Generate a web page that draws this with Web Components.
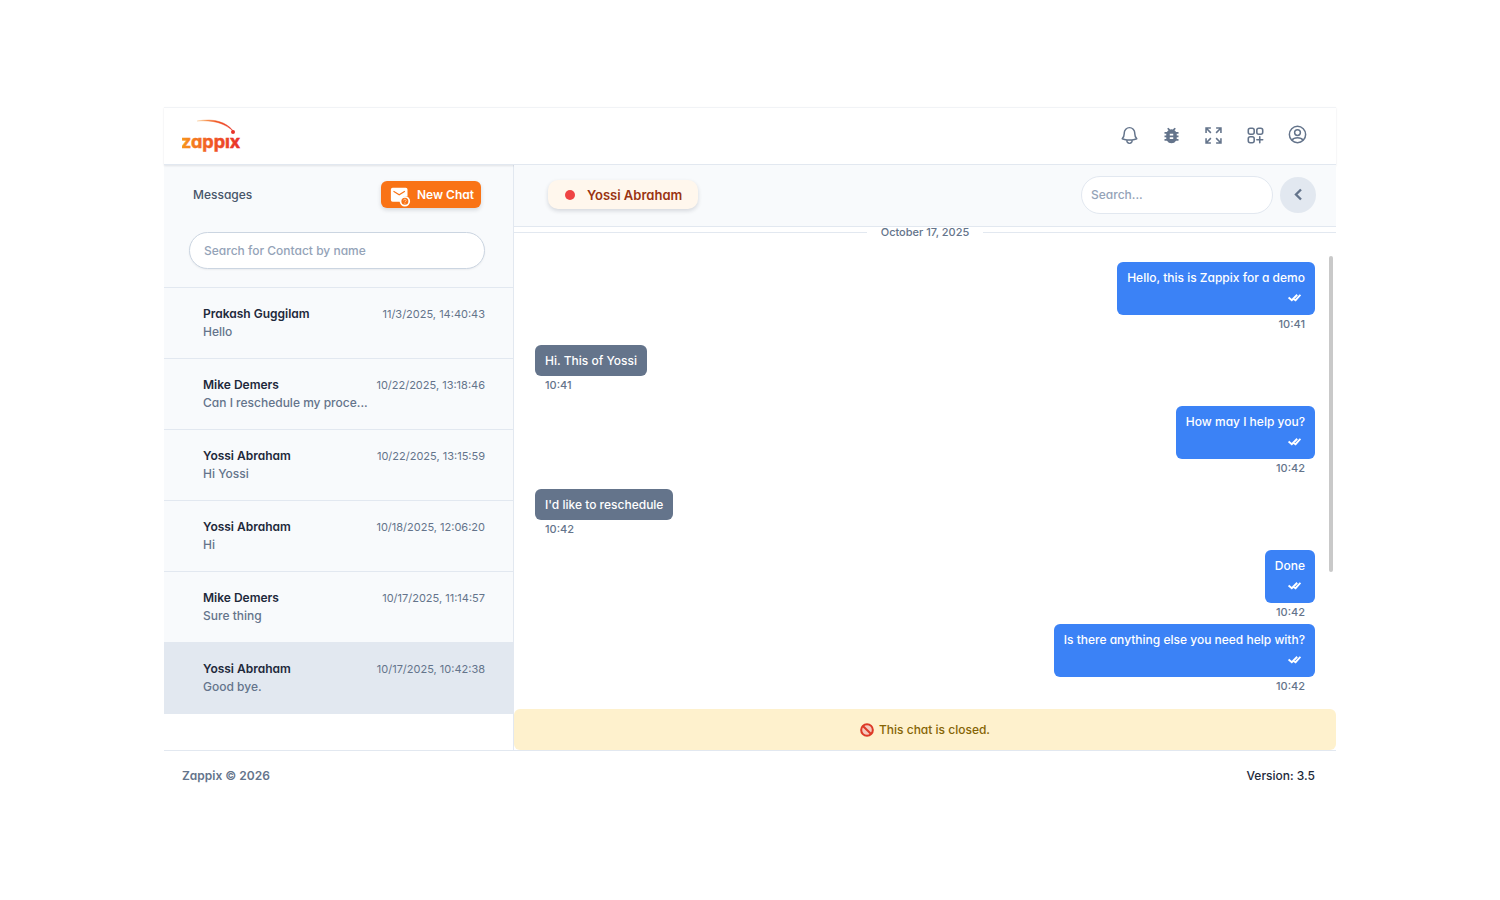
<!DOCTYPE html>
<html lang="en">
<head>
<meta charset="utf-8">
<title>Zappix Messages</title>
<style>
  body {
    margin: 0;
    background: #fff;
    color: #1e293b;
    font-family: Inter, "Liberation Sans", sans-serif;
    font-size: 12px;
    font-weight: 500;
    font-feature-settings: "cv11";
  }
</style>
</head>
<body>
<zx-app></zx-app>
<script>
const define = (name, html, setup) => {
  const template = document.createElement('template');
  template.innerHTML = `<style>:host,*{box-sizing:border-box}button,input{font:inherit;font-feature-settings:inherit;margin:0}</style>` + html;
  customElements.define(name, class extends HTMLElement {
    constructor() {
      super();
      this.attachShadow({ mode: 'open' }).append(template.content.cloneNode(true));
    }
    connectedCallback() { if (setup) setup(this, this.shadowRoot); }
  });
};

const icons = {
  bell: '<path fill="none" stroke="currentColor" stroke-width="1.7" stroke-linecap="round" stroke-linejoin="round" d="M14.857 17.082a23.848 23.848 0 0 0 5.454-1.31A8.967 8.967 0 0 1 18 9.75V9A6 6 0 0 0 6 9v.75a8.967 8.967 0 0 1-2.312 6.022c1.733.64 3.56 1.085 5.455 1.31m5.714 0a24.255 24.255 0 0 1-5.714 0m5.714 0a3 3 0 1 1-5.714 0"/>',
  bug: '<path fill="currentColor" d="M20 8h-2.81a5.985 5.985 0 0 0-1.82-1.96L17 4.41 15.59 3l-2.17 2.17a6.002 6.002 0 0 0-2.83 0L8.41 3 7 4.41l1.62 1.63C7.88 6.55 7.26 7.22 6.81 8H4v2h2.09c-.05.33-.09.66-.09 1v1H4v2h2v1c0 .34.04.67.09 1H4v2h2.81a5.99 5.99 0 0 0 10.38 0H20v-2h-2.09c.05-.33.09-.66.09-1v-1h2v-2h-2v-1c0-.34-.04-.67-.09-1H20V8zm-6 8h-4v-2h4v2zm0-4h-4v-2h4v2z"/>',
  expand: '<path fill="none" stroke="currentColor" stroke-width="1.8" d="M3.500 9V3.500H9M3.500 3.500l5.500 5.500M15 3.500h5.500V9M20.500 3.500L15 9M3.500 15v5.500H9M3.500 20.500L9 15M20.500 15v5.500H15M20.500 20.500L15 15"/>',
  apps: '<path fill="none" stroke="currentColor" stroke-width="1.8" stroke-linecap="round" stroke-linejoin="round" d="M13.500 16.875h3.375m0 0h3.375m-3.375 0V13.500m0 3.375v3.375M6 10.500h2.250a2.250 2.250 0 0 0 2.250-2.250V6a2.250 2.250 0 0 0-2.250-2.250H6A2.250 2.250 0 0 0 3.750 6v2.250A2.250 2.250 0 0 0 6 10.500Zm0 9.750h2.250A2.250 2.250 0 0 0 10.500 18v-2.250a2.250 2.250 0 0 0-2.250-2.250H6a2.250 2.250 0 0 0-2.250 2.250V18A2.250 2.250 0 0 0 6 20.250Zm9.750-9.750H18a2.250 2.250 0 0 0 2.250-2.250V6A2.250 2.250 0 0 0 18 3.750h-2.250A2.250 2.250 0 0 0 13.500 6v2.250a2.250 2.250 0 0 0 2.250 2.250Z"/>',
  user: '<g fill="none" stroke="currentColor" stroke-width="1.7"><circle cx="12" cy="12" r="9.300"/><circle cx="12" cy="9.800" r="3.300"/><path d="M5.500 18.500C7 16.500 9.300 15.700 12 15.700s5 .8 6.500 2.800"/></g>',
  back: '<path fill="none" stroke="currentColor" stroke-width="3.800" d="M16 4 8 12l8 8"/>',
  mail: '<path fill="currentColor" d="M3 2h15a2 2 0 0 1 2 2v8a6.500 6.500 0 0 0-8.500 6H3a2 2 0 0 1-2-2V4a2 2 0 0 1 2-2z"/><path fill="none" stroke="#f97316" stroke-width="1.300" d="M4 6l6.500 4L17 6"/><circle cx="17" cy="17.500" r="5" fill="#f97316" stroke="currentColor" stroke-width="2"/><path fill="none" stroke="currentColor" stroke-opacity=".6" stroke-width="1" d="M15.500 16.500c0-2 3-2 3 0 0 1-1.500 1-1.500 2.200M17 19.500v1"/>',
  checks: '<path fill="none" stroke="currentColor" stroke-width="3.500" d="M1 12l6 5L17 7M11 15l3 2L23 7"/>',
  closed: '<circle cx="12" cy="12" r="10" fill="#f5c9bd" stroke="#dd3a27" stroke-width="3.500"/><path stroke="#dd3a27" stroke-width="3.500" d="M5 5l14 14"/>'
};
define('zx-icon', `
<style>
  :host { display: inline-block; width: 21px; height: 21px; flex: none; }
  svg { display: block; width: 100%; height: 100%; }
</style>
<svg viewBox="0 0 24 24" aria-hidden="true"></svg>`,
  (el, root) => { root.querySelector('svg').innerHTML = icons[el.getAttribute('name')]; });

define('zx-logo', `
<style>
  :host { display: block; }
  a, svg { display: block; }
  text { font: 700 18px Inter, sans-serif; font-feature-settings: "cv11"; }
</style>
<a href="#" aria-label="Zappix home">
  <svg width="62" height="36" viewBox="0 0 62 36">
    <defs>
      <linearGradient id="ink" gradientUnits="userSpaceOnUse" x1="0" y1="0" x2="57" y2="0">
        <stop offset="0" stop-color="#f7941d"/><stop offset=".5" stop-color="#f15a24"/><stop offset="1" stop-color="#e8332a"/>
      </linearGradient>
      <linearGradient id="trail" gradientUnits="userSpaceOnUse" x1="14" y1="0" x2="52" y2="0">
        <stop offset="0" stop-color="#f7941d" stop-opacity=".3"/><stop offset=".5" stop-color="#f15a24"/><stop offset="1" stop-color="#e8332a"/>
      </linearGradient>
    </defs>
    <path d="M15 3C32 0 45 4 52 14C43 5 32 2 15 3Z" fill="url(#trail)" stroke="url(#trail)" stroke-width=".5"/>
    <circle cx="51" cy="14" r="2" fill="#e8332a"/>
    <text x="-1" y="30" fill="url(#ink)" stroke="url(#ink)" stroke-width=".5">zappıx</text>
  </svg>
</a>`);

define('zx-topbar', `
<style>
  :host { display: flex; align-items: center; justify-content: space-between; height: 58px; padding: 0 28px 0 18px;
    border-top: 1px solid #f1f3f6; border-bottom: 1px solid #e2e8f0; box-shadow: 0 1px 2px rgb(15 23 42 / .1); position: relative; background: #fff; flex: none; }
  nav { display: flex; gap: 21px; padding-top: 2px; }
  button { display: block; padding: 0; border: 0; background: none; color: #64748b; }
  button:last-child { margin-top: -2px; }
</style>
<zx-logo></zx-logo>
<nav aria-label="Tools">
  <button aria-label="Notifications"><zx-icon name="bell"></zx-icon></button>
  <button aria-label="Report a bug"><zx-icon name="bug"></zx-icon></button>
  <button aria-label="Full screen"><zx-icon name="expand"></zx-icon></button>
  <button aria-label="Shortcuts"><zx-icon name="apps"></zx-icon></button>
  <button aria-label="Account"><zx-icon name="user"></zx-icon></button>
</nav>`);

define('zx-conversation', `
<style>
  :host { display: block; background: #f8fafc; border-bottom: 1px solid #e2e8f0; }
  :host([selected]) { background: #e2e8f0; }
  a { display: grid; grid-template-columns: 170px 1fr; height: 70px; padding: 17px 28px 0 39px; line-height: 18px; color: inherit; text-decoration: none; align-content: start; }
  .name { font-weight: 600; color: #1e293b; }
  .time { font-size: 11px; font-weight: 400; color: #64748b; text-align: right; white-space: nowrap; }
  .text { color: #64748b; white-space: nowrap; overflow: hidden; text-overflow: ellipsis; }
</style>
<a href="#"><span class="name"><slot name="name"></slot></span><span class="time"><slot name="time"></slot></span><span class="text"><slot></slot></span></a>`);

define('zx-sidebar', `
<style>
  :host { display: block; width: 350px; flex: none; border-right: 1px solid #e2e8f0; background: #fff; }
  header { background: #f8fafc; border-bottom: 1px solid #e2e8f0; padding: 16px 28px 18px 25px; }
  .top { display: flex; align-items: center; justify-content: space-between; padding: 0 4px; margin-bottom: 24px; }
  h1 { margin: 0; font-size: 12px; font-weight: 500; color: #475569; }
  button { display: flex; align-items: center; gap: 6px; height: 27px; padding: 0 7px 0 9px; border: 0; border-radius: 6px; background: #f97316; color: #fff; font-weight: 600; box-shadow: 0 2px 4px rgb(15 23 42 / .15); }
  button zx-icon { margin-top: 3px; }
  input { display: block; width: 100%; height: 37px; padding: 0 14px; border: 1px solid #cbd5e1; border-radius: 19px; background: #fff; box-shadow: 0 1px 2px rgb(15 23 42 / .06); outline: 0; }
  input::placeholder { color: #94a3b8; opacity: 1; }
</style>
<header>
  <div class="top"><h1>Messages</h1><button><zx-icon name="mail"></zx-icon>New Chat</button></div>
  <input type="search" aria-label="Search for Contact by name" placeholder="Search for Contact by name">
</header>
<slot></slot>`);

define('zx-message', `
<style>
  :host { display: flex; flex-direction: column; align-items: flex-start; margin-bottom: 12px; }
  :host([sent]) { align-items: flex-end; }
  :host([followed]) { margin-bottom: 3px; }
  .bubble { padding: 6px 10px; border-radius: 6px; background: #64748b; color: #fff; line-height: 19px; }
  :host([sent]) .bubble { background: #3b82f6; }
  .receipt { display: none; height: 22px; padding: 4px 4px 0 0; justify-content: flex-end; }
  :host([sent]) .receipt { display: flex; }
  .receipt zx-icon { width: 13px; height: 13px; }
  .time { padding: 0 10px; font-size: 11px; line-height: 18px; color: #64748b; }
</style>
<div class="bubble"><slot></slot><div class="receipt"><zx-icon name="checks"></zx-icon></div></div>
<div class="time"><slot name="time"></slot></div>`);

define('zx-chat', `
<style>
  :host { display: flex; flex-direction: column; flex: 1; min-width: 0; position: relative; }
  header { display: flex; align-items: center; gap: 7px; height: 62px; padding: 0 20px 2px 34px; background: #f8fafc; border-bottom: 1px solid #e2e8f0; flex: none; }
  .contact { display: flex; align-items: center; gap: 12px; height: 29px; padding: 0 16px 0 17px; margin-right: auto; border-radius: 10px; background: #fff7ed; color: #9a3412; font-weight: 600; font-size: 13px; box-shadow: 0 2px 4px rgb(15 23 42 / .15); }
  .contact i { width: 10px; height: 10px; border-radius: 50%; background: #ef4444; }
  input { width: 192px; height: 38px; padding: 0 9px; border: 1px solid #e2e8f0; border-radius: 19px; background: #fff; outline: 0; }
  input::placeholder { color: #94a3b8; opacity: 1; }
  button { display: grid; place-items: center; width: 36px; height: 36px; padding: 0; border: 0; border-radius: 50%; background: #e2e8f0; color: #64748b; }
  button zx-icon { width: 15px; height: 15px; }
  .log { flex: 1; min-height: 0; overflow: hidden; }
  .date { display: flex; align-items: center; gap: 14px; margin-bottom: 25px; font-size: 11px; line-height: 10px; color: #64748b; }
  .date::before, .date::after { content: ""; flex: 1; height: 1px; background: #e2e8f0; }
  .messages { padding: 0 21px; }
  .thumb { position: absolute; top: 91px; right: 3px; width: 4px; height: 316px; border-radius: 2px; background: #c9c9c9; }
  .notice { display: flex; align-items: center; justify-content: center; gap: 5px; height: 41px; border-radius: 6px; background: #fef1cd; color: #856404; flex: none; }
  .notice zx-icon { width: 14px; height: 14px; }
</style>
<header>
  <div class="contact"><i></i><slot name="contact"></slot></div>
  <input type="search" aria-label="Search messages" placeholder="Search...">
  <button aria-label="Show details"><zx-icon name="back"></zx-icon></button>
</header>
<div class="log">
  <div class="date"><slot name="date"></slot></div>
  <div class="messages"><slot></slot></div>
</div>
<div class="thumb"></div>
<div class="notice" role="status"><zx-icon name="closed"></zx-icon><slot name="notice"></slot></div>`);

define('zx-footer', `
<style>
  :host { display: flex; align-items: center; justify-content: space-between; height: 50px; padding: 0 21px 0 18px; border-top: 1px solid #e2e8f0; flex: none; }
  .brand { color: #64748b; font-weight: 600; }
</style>
<span class="brand">Zappix © 2026</span><span>Version: 3.5</span>`);

define('zx-app', `
<style>
  :host { display: flex; flex-direction: column; min-height: 100vh; padding: 107px 164px 100px; }
  main { display: flex; flex: 1; }
</style>
<zx-topbar></zx-topbar>
<main>
  <zx-sidebar>
    <zx-conversation><span slot="name">Prakash Guggilam</span><span slot="time">11/3/2025, 14:40:43</span>Hello</zx-conversation>
    <zx-conversation><span slot="name">Mike Demers</span><span slot="time">10/22/2025, 13:18:46</span>Can I reschedule my proce...</zx-conversation>
    <zx-conversation><span slot="name">Yossi Abraham</span><span slot="time">10/22/2025, 13:15:59</span>Hi Yossi</zx-conversation>
    <zx-conversation><span slot="name">Yossi Abraham</span><span slot="time">10/18/2025, 12:06:20</span>Hi</zx-conversation>
    <zx-conversation><span slot="name">Mike Demers</span><span slot="time">10/17/2025, 11:14:57</span>Sure thing</zx-conversation>
    <zx-conversation selected><span slot="name">Yossi Abraham</span><span slot="time">10/17/2025, 10:42:38</span>Good bye.</zx-conversation>
  </zx-sidebar>
  <zx-chat>
    <span slot="contact">Yossi Abraham</span>
    <span slot="date">October 17, 2025</span>
    <zx-message sent>Hello, this is Zappix for a demo<span slot="time">10:41</span></zx-message>
    <zx-message>Hi. This of Yossi<span slot="time">10:41</span></zx-message>
    <zx-message sent>How may I help you?<span slot="time">10:42</span></zx-message>
    <zx-message>I'd like to reschedule<span slot="time">10:42</span></zx-message>
    <zx-message sent followed>Done<span slot="time">10:42</span></zx-message>
    <zx-message sent>Is there anything else you need help with?<span slot="time">10:42</span></zx-message>
    <span slot="notice">This chat is closed.</span>
  </zx-chat>
</main>
<zx-footer></zx-footer>`);
</script>
</body>
</html>
